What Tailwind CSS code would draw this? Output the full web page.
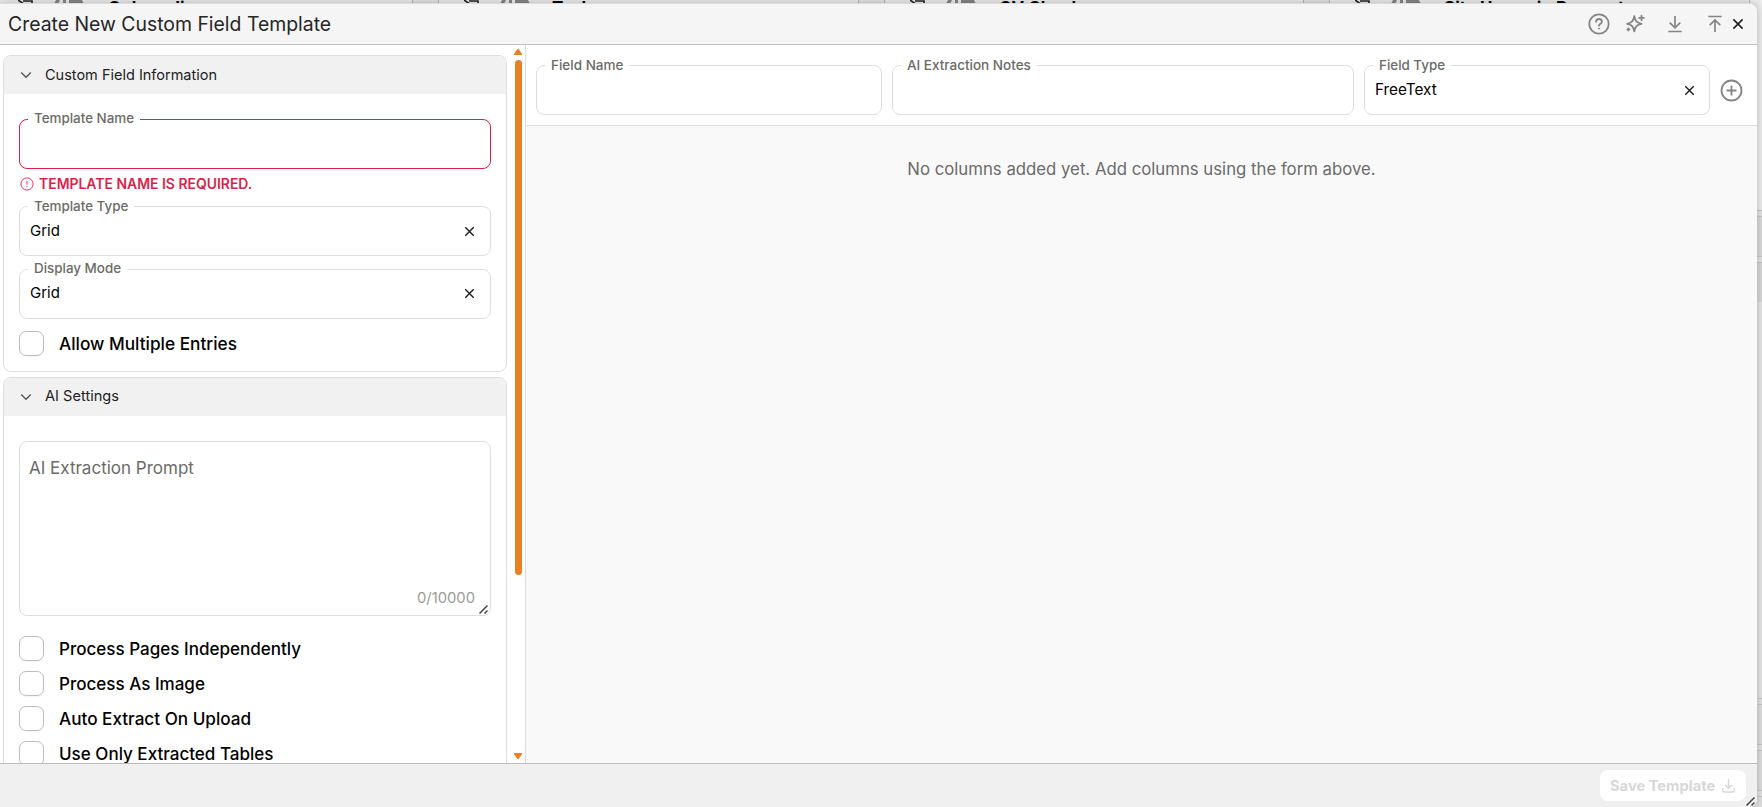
<!DOCTYPE html>
<html lang="en">
<head>
    <meta charset="UTF-8">
    <title>Create New Custom Field Template</title>
    <script src="https://cdn.jsdelivr.net/npm/@tailwindcss/browser@4"></script>
</head>
<body class="font-['Inter',sans-serif] text-black bg-[#e3e3e3] w-[1762px] h-[807px] overflow-hidden relative">
    <!-- Board behind the dialog, only its edges stay visible -->
    <div class="flex h-[807px] overflow-hidden">
        <div class="w-[413px] h-1 border-r border-[#b5b5b5] bg-[#ececec] flex overflow-hidden pl-[18px] text-[17px] font-bold leading-5">
            <svg class="w-4 h-1 shrink-0" viewBox="0 0 16 4" fill="none" stroke="#222" stroke-width="1.6"><path d="M0 0l5 3.5M5 1h9v3"/></svg>
            <svg class="w-[30px] h-1 ml-5 mr-[24px] shrink-0" viewBox="0 0 30 4" fill="#858585"><path d="M2 0h4L4 4H0zM9 0h3v4H9zM15 0h13l2 4H15z"/></svg>
            <span class="-mt-[2px]">Onboarding</span>
        </div>
        <div class="w-[421px] h-1 ml-[25px] border-x border-[#b5b5b5] bg-[#ececec] flex overflow-hidden pl-[25px] text-[17px] font-bold leading-5">
            <svg class="w-4 h-1 shrink-0" viewBox="0 0 16 4" fill="none" stroke="#222" stroke-width="1.6"><path d="M0 0l5 3.5M5 1h9v3"/></svg>
            <svg class="w-[30px] h-1 ml-5 mr-[22px] shrink-0" viewBox="0 0 30 4" fill="#858585"><path d="M2 0h4L4 4H0zM9 0h3v4H9zM15 0h13l2 4H15z"/></svg>
            <span class="-mt-[2px]">Tasks</span>
        </div>
        <div class="w-[420px] h-1 ml-[25px] border-x border-[#b5b5b5] bg-[#ececec] flex overflow-hidden pl-[25px] text-[17px] font-bold leading-5">
            <svg class="w-4 h-1 shrink-0" viewBox="0 0 16 4" fill="none" stroke="#222" stroke-width="1.6"><path d="M0 0l5 3.5M5 1h9v3"/></svg>
            <svg class="w-[30px] h-1 ml-5 mr-[23px] shrink-0" viewBox="0 0 30 4" fill="#858585"><path d="M2 0h4L4 4H0zM9 0h3v4H9zM15 0h13l2 4H15z"/></svg>
            <span class="-mt-[2px]">CV Check</span>
        </div>
        <div class="w-[421px] h-3 ml-[25px] border-x border-[#b5b5b5] bg-[#ececec] flex overflow-hidden pl-[25px] text-[17px] font-bold leading-5">
            <svg class="w-4 h-1 shrink-0" viewBox="0 0 16 4" fill="none" stroke="#222" stroke-width="1.6"><path d="M0 0l5 3.5M5 1h9v3"/></svg>
            <svg class="w-[30px] h-1 ml-5 mr-[23px] shrink-0" viewBox="0 0 30 4" fill="#858585"><path d="M2 0h4L4 4H0zM9 0h3v4H9zM15 0h13l2 4H15z"/></svg>
            <span class="-mt-[2px]">Site Usage in Request</span>
        </div>
        <div class="flex-1 flex flex-col">
            <div class="h-[210px] bg-[#ededed]"></div>
            <div class="h-[7px] border-y border-[#c8c8c8]"></div>
            <div class="h-[39px] bg-[#dadada]"></div>
            <div class="h-[7px] border-y border-[#c8c8c8]"></div>
            <div class="h-[39px] bg-[#d8d8d8]"></div>
            <div class="h-[396px] bg-[#e6e6e6]"></div>
            <div class="h-[7px] border-y border-[#c8c8c8]"></div>
            <div class="h-[39px] bg-[#dedede]"></div>
            <div class="h-[7px] border-y border-[#c8c8c8]"></div>
            <div class="h-[39px] bg-[#dedede]"></div>
            <div class="h-[7px] border-y border-[#c8c8c8]"></div>
            <div class="flex-1 bg-[#dedede]"></div>
        </div>
    </div>

    <!-- Dialog -->
    <div class="absolute top-[3px] left-0 w-[1757px] h-[804px] flex flex-col bg-white border-t border-[#dcdcdc] rounded-tr-lg rounded-br-lg overflow-hidden shadow-[0_0_8px_rgba(0,0,0,0.25)]">
        <div class="h-[41px] shrink-0 flex items-center bg-[#f5f5f5] border-b border-[#c2c2c2] pl-2 pr-[13px] text-[#858585]">
            <h1 class="text-[19.4px] text-[#262626] leading-6 flex-1">Create New Custom Field Template</h1>
            <svg class="w-[22px] h-[22px] mr-[15px]" viewBox="0 0 22 22" fill="none" stroke="currentColor" stroke-width="1.8" stroke-linecap="round"><circle cx="11" cy="11" r="9.7"/><path d="M8.1 8.8c0-1.7 1.3-2.8 2.9-2.8s2.9 1.1 2.9 2.7c0 2.1-2.9 2.1-2.9 4"/><circle cx="11" cy="15.6" r=".6" fill="currentColor" stroke-width=".8"/></svg>
            <svg class="w-5 h-5 mr-[21px]" viewBox="0 0 20 20" fill="none" stroke="currentColor" stroke-width="1.8" stroke-linejoin="round" stroke-linecap="round"><path d="M9.3 2.2c.9 4.7 2.4 6.6 7.2 7.6-4.8 1-6.3 2.9-7.2 7.6-.9-4.7-2.4-6.6-7.2-7.6 4.8-1 6.3-2.9 7.2-7.6z"/><path d="M16.5 1.6v4.600M14.2 3.9h4.6"/><path d="M3.400 14.4v2M2.400 15.4h2"/></svg>
            <svg class="w-[18px] h-[18px] mr-[22px]" viewBox="0 0 18 18" fill="none" stroke="currentColor" stroke-width="1.7"><path d="M9 1v11.5M3.7 7.6L9 12.900l5.300-5.300M2.300 16.500h13.400"/></svg>
            <svg class="w-[18px] h-[18px] mr-[8px]" viewBox="0 0 18 18" fill="none" stroke="currentColor" stroke-width="1.7"><path d="M9 17V5M3.7 10.2L9 4.900l5.300 5.300M2.300 1.500h13.400"/></svg>
            <svg class="w-3 h-3" viewBox="0 0 12 12" fill="none" stroke="#1a1a1a" stroke-width="1.5"><path d="M1.400 1.400l9.200 9.200M10.600 1.400l-9.200 9.200"/></svg>
        </div>

        <div class="h-[718px] shrink-0 flex">
            <!-- Settings pane -->
            <div class="w-[526px] shrink-0 border-r border-[#dcdcdc] flex pl-[3px] overflow-hidden">
                <div class="w-[504px] shrink-0 h-[718px] pt-[10px] flex flex-col gap-[5px] overflow-hidden">
                    <section class="shrink-0 h-[317px] border border-[#dedede] rounded-lg overflow-hidden">
                        <div class="h-[38px] flex items-center gap-[13px] bg-[#f1f1f1] pl-4">
                            <svg class="w-3 h-3" viewBox="0 0 12 12" fill="none" stroke="#555" stroke-width="1.4"><path d="M1.200 3.500L6 8.200l4.800-4.700"/></svg>
                            <h2 class="text-[14.5px] text-[#222]">Custom Field Information</h2>
                        </div>
                        <div class="px-[15px] pt-[25px]">
                            <div class="relative h-[50px] border border-[#dc1f4b] rounded-lg">
                                <label class="absolute -top-[12px] left-[8px] bg-white px-1.5 text-[13.4px] leading-5 font-medium text-[#6b6b66]">Template Name</label>
                            </div>
                            <div class="h-[37px] flex items-center pb-[8px] pl-px gap-[5px] text-[#dc1f4b]">
                                <svg class="w-3.5 h-3.5" viewBox="0 0 14 14" fill="none" stroke="currentColor" stroke-width=".9"><circle cx="7" cy="7" r="6.100"/><path d="M7 3.800v3.900M7 8.900v1.200"/></svg>
                                <span class="text-[13.95px] font-semibold leading-5">TEMPLATE NAME IS REQUIRED.</span>
                            </div>
                            <div class="relative h-[50px] border border-[#dedede] rounded-lg flex items-center justify-between pl-2.5 pr-[15px]">
                                <label class="absolute -top-[11px] left-[8px] bg-white px-1.5 text-[13.4px] leading-5 font-medium text-[#6b6b66]">Template Type</label>
                                <span class="text-[15px]">Grid</span>
                                <svg class="w-[11px] h-[11px]" viewBox="0 0 12 12" fill="none" stroke="#1a1a1a" stroke-width="1.5"><path d="M1.400 1.400l9.200 9.200M10.600 1.400l-9.200 9.200"/></svg>
                            </div>
                            <div class="relative h-[50px] mt-[13px] border border-[#dedede] rounded-lg flex items-center justify-between pl-2.5 pr-[15px] pb-px">
                                <label class="absolute -top-[12px] left-[8px] bg-white px-1.5 text-[13.4px] leading-5 font-medium text-[#6b6b66]">Display Mode</label>
                                <span class="text-[15px]">Grid</span>
                                <svg class="w-[11px] h-[11px]" viewBox="0 0 12 12" fill="none" stroke="#1a1a1a" stroke-width="1.5"><path d="M1.400 1.400l9.200 9.200M10.600 1.400l-9.200 9.200"/></svg>
                            </div>
                            <div class="flex items-center gap-[15px] mt-3">
                                <div class="w-[25px] h-[25px] border border-[#bdbdbd] rounded-[7px] shadow-xs"></div>
                                <span class="text-[17.25px] leading-6 font-medium">Allow Multiple Entries</span>
                            </div>
                        </div>
                    </section>

                    <section class="shrink-0 h-[440px] border border-[#dedede] rounded-lg overflow-hidden">
                        <div class="h-[38px] flex items-center gap-[13px] bg-[#f1f1f1] pl-4">
                            <svg class="w-3 h-3" viewBox="0 0 12 12" fill="none" stroke="#555" stroke-width="1.4"><path d="M1.200 3.500L6 8.200l4.800-4.700"/></svg>
                            <h2 class="text-[14.6px] text-[#222]">AI Settings</h2>
                        </div>
                        <div class="px-[15px] pt-[25px]">
                            <div class="relative h-[175px] border border-[#dedede] rounded-lg pl-[9px] pt-[14px] flex flex-col justify-between">
                                <span class="text-[17px] leading-6 text-[#6b6b66]">AI Extraction Prompt</span>
                                <span class="self-end pr-[15px] pb-[7px] text-[14.8px] leading-5 text-[#9c9c98]">0/10000</span>
                                <svg class="absolute right-[2px] bottom-[1px] w-[9px] h-[9px]" viewBox="0 0 9 9" fill="none" stroke="#444" stroke-width="1.5"><path d="M.5 8.500l8-8M5.500 8.500l3-3"/></svg>
                            </div>
                            <div class="mt-5 flex flex-col gap-2.5">
                                <div class="flex items-center gap-[15px]">
                                    <div class="w-[25px] h-[25px] border border-[#bdbdbd] rounded-[7px] shadow-xs"></div>
                                    <span class="text-[17.05px] leading-6 font-medium">Process Pages Independently</span>
                                </div>
                                <div class="flex items-center gap-[15px]">
                                    <div class="w-[25px] h-[25px] border border-[#bdbdbd] rounded-[7px] shadow-xs"></div>
                                    <span class="text-[17.05px] leading-6 font-medium">Process As Image</span>
                                </div>
                                <div class="flex items-center gap-[15px]">
                                    <div class="w-[25px] h-[25px] border border-[#bdbdbd] rounded-[7px] shadow-xs"></div>
                                    <span class="text-[17.15px] leading-6 font-medium">Auto Extract On Upload</span>
                                </div>
                                <div class="flex items-center gap-[15px]">
                                    <div class="w-[25px] h-[25px] border border-[#bdbdbd] rounded-[7px] shadow-xs"></div>
                                    <span class="text-[17.05px] leading-6 font-medium">Use Only Extracted Tables</span>
                                </div>
                            </div>
                        </div>
                    </section>
                </div>
                <!-- Scrollbar -->
                <div class="w-[18px] shrink-0 flex flex-col items-end pt-1 pb-[4px] pr-[3px]">
                    <svg class="w-2 h-1.5 shrink-0" viewBox="0 0 8 6" fill="#e98024"><path d="M0 6V5l3-4.500q1-1 2 0L8 5v1z"/></svg>
                    <div class="w-[7px] h-[515px] mt-[5px] rounded-full bg-[#e98024]"></div>
                    <svg class="w-2 h-1.5 mt-auto shrink-0" viewBox="0 0 8 6" fill="#e98024"><path d="M0 0v1l3 4.500q1 1 2 0L8 1V0z"/></svg>
                </div>
            </div>

            <!-- Columns pane -->
            <div class="flex-1 flex flex-col bg-[#f9f9f9]">
                <div class="h-[81px] shrink-0 bg-white border-b border-[#dcdcdc] flex items-start pt-5 pl-2.5 gap-2.5">
                    <div class="relative w-[346px] h-[50px] border border-[#dedede] rounded-lg">
                        <label class="absolute -top-[11px] left-[8px] bg-white px-1.5 text-[13.5px] leading-5 font-medium text-[#6b6b66]">Field Name</label>
                    </div>
                    <div class="relative w-[462px] h-[50px] border border-[#dedede] rounded-lg">
                        <label class="absolute -top-[11px] left-[8px] bg-white px-1.5 text-[13.5px] leading-5 font-medium text-[#6b6b66]">AI Extraction Notes</label>
                    </div>
                    <div class="relative w-[346px] h-[50px] border border-[#dedede] rounded-lg flex items-center justify-between pl-2.5 pr-[14px]">
                        <label class="absolute -top-[11px] left-[8px] bg-white px-1.5 text-[13.4px] leading-5 font-medium text-[#6b6b66]">Field Type</label>
                        <span class="text-[15.3px]">FreeText</span>
                        <svg class="w-[11px] h-[11px]" viewBox="0 0 12 12" fill="none" stroke="#1a1a1a" stroke-width="1.5"><path d="M1.400 1.400l9.200 9.200M10.600 1.400l-9.200 9.200"/></svg>
                    </div>
                    <svg class="w-[23px] h-[23px] mt-[14px]" viewBox="0 0 23 23" fill="none" stroke="#858585" stroke-width="1.8"><circle cx="11.500" cy="11.500" r="10"/><path d="M11.500 6.500v10M6.500 11.500h10"/></svg>
                </div>
                <p class="text-center pt-[31px] text-[16.75px] leading-6 text-[#6b6b6b]">No columns added yet. Add columns using the form above.</p>
            </div>
        </div>

        <div class="relative flex-1 bg-[#f0f0f0] border-t border-[#bdbdbd] flex items-start justify-end pt-1.5 pr-[11px]">
            <button class="w-[146px] h-[31px] bg-white rounded-lg flex items-center gap-[7px] pl-2.5 pt-px text-[14.7px] font-bold text-[#d8d8d8]">Save Template
                <svg class="w-[13px] h-[14px]" viewBox="0 0 13 14" fill="none" stroke="currentColor" stroke-width="1.4"><path d="M6.500 0v9M3 5.800l3.500 3.500L10 5.800M.7 9v2.500q0 1.500 1.500 1.500h8.600q1.500 0 1.500-1.500V9"/></svg>
            </button>
            <svg class="absolute right-[2px] bottom-[1px] w-[9px] h-[9px]" viewBox="0 0 9 9" fill="none" stroke="#444" stroke-width="1.5"><path d="M.5 8.500l8-8M5.500 8.500l3-3"/></svg>
        </div>
    </div>
</body>
</html>
